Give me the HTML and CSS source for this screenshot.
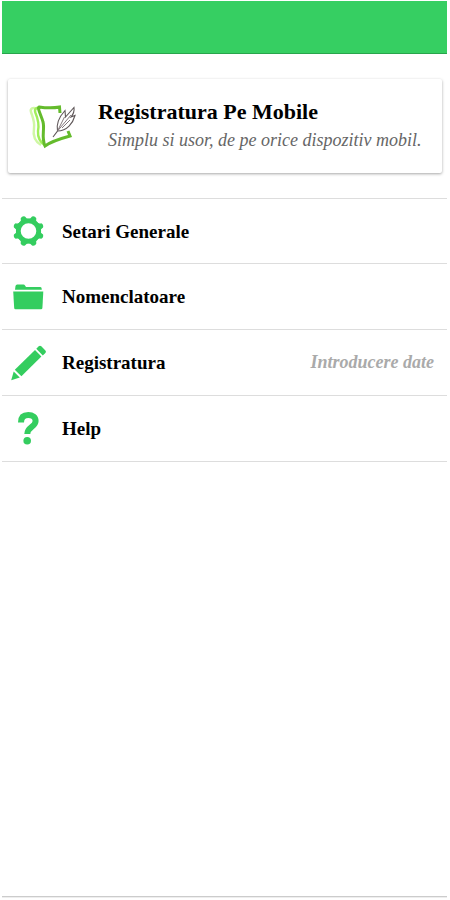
FILE: index.html
```
<!DOCTYPE html>
<html lang="ro">
  <head>
    <meta charset="UTF-8" />
    <meta name="viewport" content="width=device-width, initial-scale=1" />
    <title>Registratura Pe Mobile</title>
    <link rel="stylesheet" href="styles.css">
  </head>

  <body>
    <div class="page">
      <header class="header"></header>

      <main class="content">
        <div class="card">
          <!-- logo -->
          <svg class="logo" width="50" height="46" viewBox="0 0 50 46" fill="none">
            <path d="M9 5.5C4 4 2 6 3 9C5 15 7 19 6 25C5 31 6 38 13 42" stroke="#cff7a4" stroke-width="2.4"/>
            <path d="M13 5C8 4 6 6 7.5 10C10.500 17 11 23 10 28C9.500 35 12 39 17 42.500" stroke="#a0ee5a" stroke-width="2.4"/>
            <path d="M32 10L31.500 4C24 5.500 18 5 11 4C9 5 13.500 13 15 19C17 26 13 34 17 43C23 38.500 31 36 42 33L40 28" stroke="#64bb2c" stroke-width="3"/>
            <path d="M25 34L29.500 28C28 20 32 13 37 7.500L37.500 14L46 4.500C46.500 8 45.500 11 43 14L47 12.500C45 20 39 28 29.500 28" stroke="#5f5759" stroke-width="1.100"/>
            <path d="M29.500 28L43 12M30 27L36.500 14M34 25L42 17" stroke="#83787c" stroke-width="1"/>
          </svg>
          <div class="card-text">
            <h1>Registratura Pe Mobile</h1>
            <p>Simplu si usor, de pe orice dispozitiv mobil.</p>
          </div>
        </div>

        <ul class="menu">
          <li class="item">
            <svg class="icon" width="40" height="40" viewBox="0 0 40 40">
              <circle cx="19.5" cy="20" r="10.2" fill="none" stroke="#34cd5f" stroke-width="4.8"/>
              <g fill="#34cd5f" transform="translate(19.5 20)">
                <path id="tooth" d="M-5 -10.8Q-2.8 -11.8 -2.3 -14.8Q0 -16.6 2.3 -14.8Q2.8 -11.8 5 -10.8Z" transform="rotate(22.5)"/>
                <use href="#tooth" transform="rotate(45)"/>
                <use href="#tooth" transform="rotate(90)"/>
                <use href="#tooth" transform="rotate(135)"/>
                <use href="#tooth" transform="rotate(180)"/>
                <use href="#tooth" transform="rotate(225)"/>
                <use href="#tooth" transform="rotate(270)"/>
                <use href="#tooth" transform="rotate(315)"/>
              </g>
            </svg>
            <span class="label">Setari Generale</span>
          </li>
          <li class="item">
            <svg class="icon" width="40" height="40" viewBox="0 0 40 40" fill="#34cd5f">
              <path d="M6 12.8L6.5 9Q6.7 7.5 8.2 7.5H14.5Q15.5 7.5 16 8.4L17 10H31Q32.5 10 32.6 11.3L32.8 12.8Z"/>
              <path d="M4.2 14.6H34.3L33.4 31Q33.3 32.3 32 32.3H6.5Q5.3 32.3 5.2 31Z"/>
            </svg>
            <span class="label">Nomenclatoare</span>
          </li>
          <li class="item">
            <svg class="icon" width="40" height="40" viewBox="0 0 40 40" fill="#34cd5f">
              <path d="M27.3 5.7L29.7 3.3Q31 2 32.3 3.3L36.4 7.4Q37.6 8.7 36.4 10L33.8 12.4Z"/>
              <path d="M26 7L32.4 13.6L12.4 33.2L5.8 26.8Z"/>
              <path d="M4.7 28.4L10.8 34.4L2.2 37.2Z"/>
            </svg>
            <span class="label">Registratura</span>
            <span class="note">Introducere date</span>
          </li>
          <li class="item">
            <svg class="icon" width="40" height="40" viewBox="0 0 40 40">
              <path d="M12 13.4C12 8.300 14.800 6 19.300 6C23.700 6 26.600 8.300 26.600 12C26.600 18.200 18.400 17.800 18.300 25" fill="none" stroke="#34cd5f" stroke-width="6"/>
              <circle cx="18.2" cy="31.7" r="3.8" fill="#34cd5f"/>
            </svg>
            <span class="label">Help</span>
          </li>
        </ul>
      </main>

      <footer class="footer"></footer>
    </div>
  </body>
</html>
```

FILE: styles.css
```
* {
    box-sizing: border-box;
    margin: 0;
    padding: 0;
}
body {
    background-color: #fff;
    font-family: "Liberation Serif", "Times New Roman", serif;
}
.page {
    height: 100vh;
    padding: 1px 3px 0 2px;
    display: flex;
    flex-direction: column;
    overflow: hidden;
}
.header {
    height: 53px;
    flex-shrink: 0;
    background-color: #36cf62;
    border-bottom: 1px solid #28a54c;
}
.content {
    flex: 1;
}

/* card */
.card {
    height: 94px;
    margin: 25px 5px 25px 6px;
    padding-left: 20px;
    display: flex;
    align-items: center;
    border-radius: 2px;
    box-shadow: 0 1px 3px rgba(0, 0, 0, 0.35);
}
.logo {
    flex-shrink: 0;
    margin-right: 20px;
}
.card-text {
    white-space: nowrap;
}
.card-text h1 {
    font-size: 22px;
    line-height: 28px;
}
.card-text p {
    padding-left: 10px;
    font-size: 18px;
    line-height: 28px;
    font-style: italic;
    color: #666;
}

/* menu */
.menu {
    list-style: none;
    border-top: 1px solid #ddd;
}
.item {
    height: 66px;
    padding: 0 13px 0 7px;
    display: flex;
    align-items: center;
    border-bottom: 1px solid #ddd;
    font-size: 19px;
    font-weight: bold;
}
.item:first-child {
    height: 65px;
}
.icon {
    margin-right: 13px;
}
.item:first-child .label {
    padding-top: 1px;
}
.note {
    margin-left: auto;
    font-size: 18px;
    font-style: italic;
    color: #aaa;
}

.footer {
    height: 4px;
    border-top: 1px solid #ccc;
    box-shadow: inset 0 1px 0 #eee;
}
```
